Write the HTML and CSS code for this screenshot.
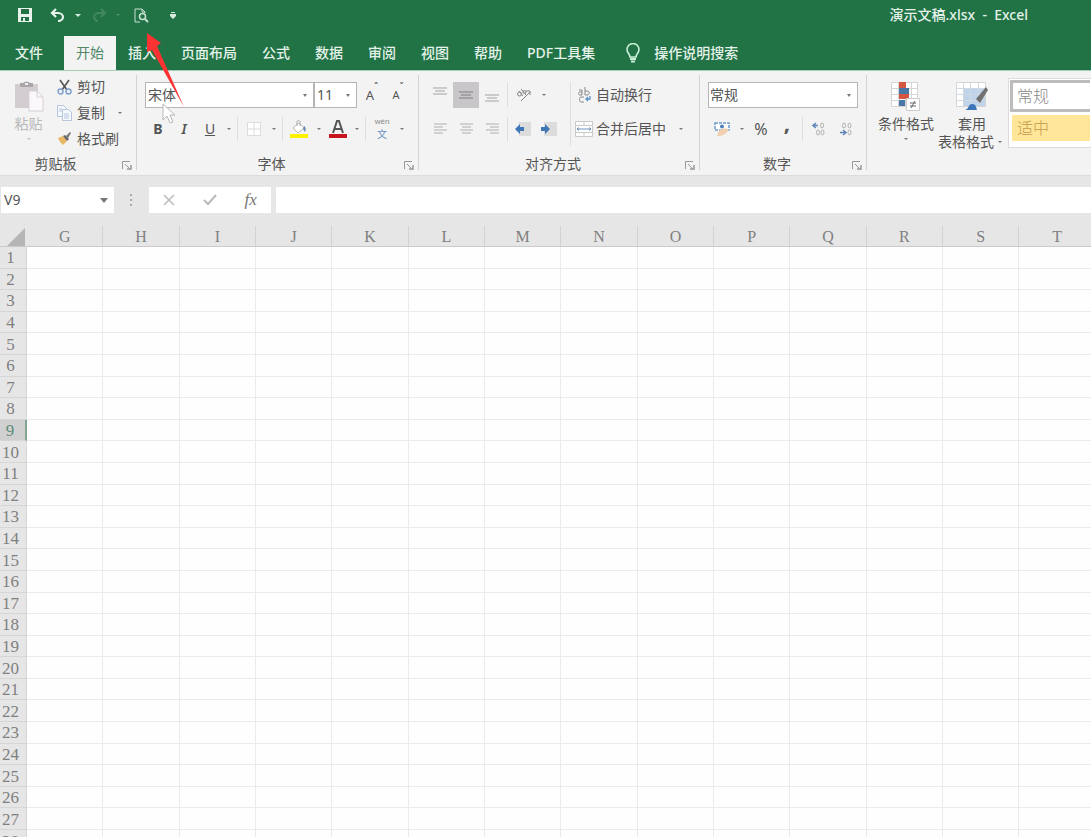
FILE: index.html
```html
<!DOCTYPE html>
<html lang="zh-CN">
<head>
<meta charset="utf-8">
<title>演示文稿.xlsx - Excel</title>
<link rel="stylesheet" href="styles.css">
</head>
<body>
<header class="titlebar">
  <div class="quick">
    <button class="qbtn" aria-label="保存"><svg width="14" height="14" viewBox="0 0 14 14"><path d="M0 0h14v14H0z" fill="#e8f3ec"/><path d="M3 1h8v5H3zM3 9h8v4H3z" fill="#217346"/><path d="M5 10h2v3H5z" fill="#e8f3ec"/></svg></button>
    <button class="qbtn undo" aria-label="撤消"><svg width="15" height="14" viewBox="0 0 15 14" fill="none" stroke="#e8f3ec" stroke-width="2.200"><path d="M6 1 2 5l4 4M2 5h6c3 0 5 2 5 4s-2 4-5 4"/></svg></button>
    <button class="caret light" aria-label="撤消列表"></button>
    <button class="qbtn redo" aria-label="恢复"><svg width="15" height="14" viewBox="0 0 15 14" fill="none" stroke="#43875f" stroke-width="2"><path d="m9 1 4 4-4 4M13 5H7C4 5 2 7 2 9s2 4 4 4"/></svg></button>
    <button class="caret faint" aria-label="恢复列表"></button>
    <button class="qbtn preview" aria-label="打印预览"><svg width="15" height="15" viewBox="0 0 15 15" fill="none" stroke="#c9e2d3"><path d="M6 14H1V1h7l3 3v1M8 1v3h3"/><circle cx="8.500" cy="8.500" r="3" stroke-width="1.500"/><path d="m11 11 3 3" stroke-width="2"/></svg></button>
    <button class="qbtn custom" aria-label="自定义快速访问工具栏"><svg width="6" height="7" viewBox="0 0 6 7"><path d="M1 0h4v1H1zM0 2h6v2L3 7 0 4z" fill="#d8eadf"/></svg></button>
  </div>
  <div class="doc-title">演示文稿.xlsx&nbsp; -&nbsp; Excel</div>
</header>
<nav class="tabs">
  <button class="tab file">文件</button>
  <button class="tab active">开始</button>
  <button class="tab">插入</button>
  <button class="tab">页面布局</button>
  <button class="tab">公式</button>
  <button class="tab">数据</button>
  <button class="tab">审阅</button>
  <button class="tab">视图</button>
  <button class="tab">帮助</button>
  <button class="tab">PDF工具集</button>
  <button class="tab tell"><svg width="14" height="20" viewBox="0 0 14 20" fill="none" stroke="#c9efd8" stroke-width="1.600"><path d="M4 14c0-3-3-4-3-7.500a6 6 0 0 1 12 0C13 10 10 11 10 14z"/><path d="M4 16h6M5 18.500h4" stroke-width="2"/></svg>操作说明搜索</button>
</nav>

<main class="ribbon">
  <section class="group clipboard">
    <div class="body">
      <button class="big paste" disabled>
        <svg width="30" height="32" viewBox="0 0 30 32"><path d="M1 4h23v24H1z" fill="#d3cdd2"/><path d="M6 3h3a4 3 0 0 1 7 0h3v4H6z" fill="#aaa6aa"/><path d="M11 3h3v2h-3z" fill="#eee"/><path d="M15 11h8l6 6v14H15z" fill="#faf8fa" stroke="#d6d0d6"/><path d="M23 11v6h6" fill="none" stroke="#d6d0d6"/></svg>
        <span>粘贴</span><i class="caret"></i>
      </button>
      <div class="stack">
        <button class="cmd"><svg width="15" height="16" viewBox="0 0 15 16" fill="none"><path d="m3 1 7 10M12 1 5 11" stroke="#555" stroke-width="1.600"/><circle cx="3.500" cy="12.500" r="2.500" stroke="#7c9fce" stroke-width="1.400"/><circle cx="11.500" cy="12.500" r="2.500" stroke="#7c9fce" stroke-width="1.400"/></svg>剪切</button>
        <button class="cmd"><svg width="15" height="16" viewBox="0 0 15 16" fill="#f5f8fc" stroke="#b5c6dd"><path d="M.5.500h6l3 3v8h-9z"/><path d="M5.500 4.500h6l3 3v8h-9z"/><path d="M2 4h3M2 6h3M7 9h5M7 11h5M7 13h5"/></svg>复制<i class="caret"></i></button>
        <button class="cmd"><svg width="15" height="16" viewBox="0 0 15 16"><path d="m1 7 5-2 4 5-4 4C4 12 2 10 1 7z" fill="#e9b965"/><path d="m6 5 2-1 4 4-2 2z" fill="#666"/><path d="m9 5 4-4 1 1-3 5z" fill="#777"/></svg>格式刷</button>
      </div>
    </div>
    <footer>剪贴板<button class="launch" aria-label="剪贴板设置"><svg width="10" height="9" viewBox="0 0 10 9" fill="none" stroke="#999"><path d="M.5 8V.500H8M3 3l5 5"/><path d="M9 4v4H5" stroke-width="1.500"/></svg></button></footer>
  </section>

  <section class="group font">
    <div class="body rows">
      <div class="row">
        <select class="pick family" aria-label="字体"><option>宋体</option></select>
        <select class="pick size" aria-label="字号"><option>11</option></select>
        <button class="tool grow" aria-label="增大字号">A<sup>ˆ</sup></button>
        <button class="tool shrink" aria-label="减小字号">A<sup>ˇ</sup></button>
      </div>
      <div class="row second">
        <button class="tool bold">B</button>
        <button class="tool italic">I</button>
        <button class="tool under">U</button><button class="caret" aria-label="下划线选项"></button>
        <i class="sep"></i>
        <button class="tool wide" aria-label="边框"><svg width="14" height="14" viewBox="0 0 14 14" fill="#fff" stroke="#dcdcdc"><path d="M.5.500h13v13H.5zM7 0v14M0 7h14"/></svg></button><button class="caret" aria-label="边框选项"></button>
        <i class="sep"></i>
        <button class="tool wide" aria-label="填充颜色"><svg width="18" height="18" viewBox="0 0 18 18"><path d="m3 8 6-5 5 5-6 5z" fill="#fff" stroke="#bbb"/><path d="M7 6V2c0-2 3-2 3 0v4" fill="none" stroke="#aaa"/><path d="M14 6c2 1 2 4 1 6l-2-3z" fill="#6686af"/><path d="M0 14h18v4H0z" fill="#fff200"/></svg></button><button class="caret" aria-label="填充选项"></button>
        <button class="tool" aria-label="字体颜色"><svg width="18" height="18" viewBox="0 0 18 18"><path d="m4 13 4-12h2l4 12M6 9h6" fill="none" stroke="#555" stroke-width="2"/><path d="M0 14h18v4H0z" fill="#c8141c"/></svg></button><button class="caret" aria-label="字体颜色选项"></button>
        <i class="sep"></i>
        <button class="tool wide phonetic" aria-label="拼音"><small>wén</small><b>文</b></button><button class="caret" aria-label="拼音选项"></button>
      </div>
    </div>
    <footer>字体<button class="launch" aria-label="字体设置"><svg width="10" height="9" viewBox="0 0 10 9" fill="none" stroke="#999"><path d="M.5 8V.500H8M3 3l5 5"/><path d="M9 4v4H5" stroke-width="1.500"/></svg></button></footer>
  </section>

  <section class="group align">
    <div class="body">
      <div class="rows">
        <div class="row">
          <button class="tool" aria-label="顶端对齐"><svg width="14" height="16" viewBox="0 0 14 16" stroke="#cbcbcb" stroke-width="2"><path d="M0 1h14M2 4h10M0 7h14"/></svg></button>
          <button class="tool on" aria-label="垂直居中"><svg width="14" height="14" viewBox="0 0 14 14" stroke="#a3a1a3" stroke-width="2"><path d="M0 4h14M2 7h10M0 10h14"/></svg></button>
          <button class="tool" aria-label="底端对齐"><svg width="14" height="14" viewBox="0 0 14 14" stroke="#cbcbcb" stroke-width="2"><path d="M0 7h14M2 10h10M0 13h14"/></svg></button>
          <i class="sep"></i>
          <button class="tool wide" aria-label="方向"><svg width="16" height="14" viewBox="0 0 16 14" fill="none" stroke="#858585"><path d="m5 13 9-9M10 3h4v4"/><circle cx="3.500" cy="6" r="2"/><path d="m3 3 4 5M5 1l5 6"/><circle cx="8.500" cy="4" r="1.500"/></svg></button><button class="caret" aria-label="方向选项"></button>
        </div>
        <div class="row">
          <button class="tool" aria-label="左对齐"><svg width="13" height="12" viewBox="0 0 13 12" stroke="#c6c6c6" stroke-width="1.500"><path d="M0 1h13M0 4h9M0 7h13M0 10h9"/></svg></button>
          <button class="tool" aria-label="居中"><svg width="13" height="12" viewBox="0 0 13 12" stroke="#c6c6c6" stroke-width="1.500"><path d="M0 1h13M2 4h9M0 7h13M2 10h9"/></svg></button>
          <button class="tool" aria-label="右对齐"><svg width="13" height="12" viewBox="0 0 13 12" stroke="#c6c6c6" stroke-width="1.500"><path d="M0 1h13M4 4h9M0 7h13M4 10h9"/></svg></button>
          <i class="sep"></i>
          <button class="tool" aria-label="减少缩进"><svg width="16" height="14" viewBox="0 0 16 14"><path d="M4 0h12v14H4z" fill="#dcdcdc"/><path d="M0 7l5-5v3h4v4H5v3z" fill="#3f76b5"/></svg></button>
          <button class="tool" aria-label="增加缩进"><svg width="16" height="14" viewBox="0 0 16 14"><path d="M3 0h13v14H3z" fill="#dcdcdc"/><path d="M9 7 4 2v3H0v4h4v3z" fill="#3f76b5"/></svg></button>
        </div>
      </div>
      <i class="sep tall"></i>
      <div class="rows">
        <button class="cmd wrap"><svg width="18" height="16" viewBox="0 0 18 16" fill="none" stroke="#888"><path d="M4 3h3v5M7 5H5c-2 0-2 3 0 3h2M10 0v8h2c3 0 3-4 0-4h-2M9 10H6c-2 0-2 5 0 5h3"/><path d="M15 9v3h-4M13 10l-2 2 2 2" stroke="#5f8fcb" stroke-width="1.300"/></svg>自动换行</button>
        <button class="cmd wrap"><svg width="18" height="16" viewBox="0 0 18 16" fill="#fff" stroke="#c9c9c9"><path d="M.5.500h17v15H.5zM9 0v4M9 12v4M0 4.500h17M0 11.500h17"/><path d="M2 8h14M4 6.500 2 8l2 1.500M14 6.500 16 8l-2 1.500" stroke="#6d93bf" fill="none"/></svg>合并后居中<i class="caret"></i></button>
      </div>
    </div>
    <footer>对齐方式<button class="launch" aria-label="对齐设置"><svg width="10" height="9" viewBox="0 0 10 9" fill="none" stroke="#999"><path d="M.5 8V.500H8M3 3l5 5"/><path d="M9 4v4H5" stroke-width="1.500"/></svg></button></footer>
  </section>

  <section class="group number">
    <div class="body rows">
      <div class="row"><select class="pick format" aria-label="数字格式"><option>常规</option></select></div>
      <div class="row">
        <button class="tool wide" aria-label="会计数字格式"><svg width="16" height="16" viewBox="0 0 16 16"><path d="M1 2h14v7H1z" fill="#fff" stroke="#6d9bd0" stroke-width="1.500" stroke-dasharray="3 1"/><circle cx="8" cy="5.500" r="2" fill="#4d7fb8"/><path d="M5 10c2-3 8-3 10-1l-4 4-5 2H3z" fill="#f0d0b0"/></svg></button><button class="caret" aria-label="会计选项"></button>
        <button class="tool percent">%</button>
        <button class="tool comma">,</button>
        <i class="sep"></i>
        <button class="tool wide" aria-label="增加小数位数"><svg width="14" height="14" viewBox="0 0 14 14" fill="none" stroke="#b0b0b0"><path d="M6 3.500H1M4 1 1 3.500 4 6" stroke="#5f86b8" stroke-width="1.500"/><ellipse cx="10" cy="3.500" rx="1.500" ry="2.500"/><ellipse cx="6" cy="10.500" rx="1.500" ry="2.500"/><ellipse cx="10.500" cy="10.500" rx="1.500" ry="2.500"/></svg></button>
        <button class="tool" aria-label="减少小数位数"><svg width="14" height="14" viewBox="0 0 14 14" fill="none" stroke="#b0b0b0"><path d="M1 10.500h5M4 8l3 2.500L4 13" stroke="#5f86b8" stroke-width="1.500"/><ellipse cx="5" cy="3.500" rx="1.500" ry="2.500"/><ellipse cx="10.500" cy="3.500" rx="1.500" ry="2.500"/><ellipse cx="10.500" cy="10.500" rx="1.500" ry="2.500"/></svg></button>
      </div>
    </div>
    <footer>数字<button class="launch" aria-label="数字设置"><svg width="10" height="9" viewBox="0 0 10 9" fill="none" stroke="#999"><path d="M.5 8V.500H8M3 3l5 5"/><path d="M9 4v4H5" stroke-width="1.500"/></svg></button></footer>
  </section>

  <section class="group styles">
    <div class="body">
      <button class="big">
        <svg width="30" height="32" viewBox="0 0 30 32"><path d="M.5 2.500h26v24H.5zM0 8.500h27M0 14.500h27M0 20.500h27M7.500 2v24M14.500 2v24M20.500 2v24" fill="#fff" stroke="#d5d5d5"/><path d="M8 2h7v6H8zM8 14h10v5H8z" fill="#d5573f"/><path d="M8 8h10v6H8zM8 20h6v6H8z" fill="#4a76a8"/><path d="M15.500 18.500h13v12h-13z" fill="#fff" stroke="#ccc"/><path d="M19 23h6M19 26h6M24 21l-4 7" stroke="#666"/></svg>
        <span>条件格式</span><i class="caret"></i>
      </button>
      <button class="big table-format">
        <svg width="32" height="32" viewBox="0 0 32 32"><path d="M.5 2.500h29v24H.5z" fill="#fff" stroke="#d5d5d5"/><path d="M8 8h21v18H8z" fill="#bfd3ea"/><path d="M0 8.500h29M0 14.500h29M0 20.500h29M7.500 2v24M14.500 2v24M22.500 2v24" stroke="#d0d8e2"/><path d="m20 19 10-12 2 3-8 13z" fill="#707070"/><path d="M9 30c4-1 3-6 7-6 4 0 4 3 5 6z" fill="#3d74b7"/></svg>
        <span>套用</span><span class="with-caret">表格格式<i class="caret"></i></span>
      </button>
      <div class="gallery">
        <button class="swatch normal">常规</button>
        <button class="swatch neutral">适中</button>
      </div>
    </div>
  </section>
</main>

<div class="formula-bar">
  <div class="name-box"><input type="text" value="V9" aria-label="名称框"><button aria-label="名称列表"><svg width="8" height="5" viewBox="0 0 8 5"><path d="M0 0h8L4 5z" fill="#777"/></svg></button></div>
  <svg class="grip" width="3" height="12" viewBox="0 0 3 12" fill="#aaa"><path d="M0 0h2v2H0zM0 5h2v2H0zM0 10h2v2H0z"/></svg>
  <div class="entry">
    <button aria-label="取消"><svg width="12" height="12" viewBox="0 0 12 12" stroke="#bbb" stroke-width="1.500"><path d="m1 1 10 10M11 1 1 11"/></svg></button>
    <button aria-label="输入"><svg width="14" height="12" viewBox="0 0 14 12" fill="none" stroke="#bbb" stroke-width="2"><path d="m1 6 4 4 8-9"/></svg></button>
    <button class="fx">fx</button>
  </div>
  <input class="formula" type="text" aria-label="编辑栏">
</div>

<div class="sheet">
  <table class="grid">
    <thead><tr id="columns"><th class="corner"><svg width="18" height="18" viewBox="0 0 18 18"><path d="M18 0v18H0z" fill="#b5b5b5"/></svg></th></tr></thead>
    <tbody id="rows"></tbody>
  </table>
</div>

<svg class="pointer" width="14" height="22" viewBox="0 0 14 22"><path d="M1 1v16l4-4 3 7 3-1-3-7h5z" fill="#fff" stroke="#b8b8b8"/></svg>
<svg class="arrow" width="38" height="75" viewBox="0 0 38 75"><path d="M1 0 15 10l-4 3 27 61L6 17l-5 2z" fill="#fa3232"/></svg>
<script src="sheet.js"></script>
</body>
</html>
```
FILE: styles.css
```css
* { box-sizing: border-box; }
body {
  margin: 0;
  height: 100vh;
  overflow: hidden;
  display: flex;
  flex-direction: column;
  background: #e6e6e6;
  color: #555;
  font: 14px/20px "Noto Sans", "Noto Sans CJK SC", sans-serif;
}
button, input, select { font: inherit; color: inherit; border: 0; padding: 0; margin: 0; background: none; border-radius: 0; }
button { display: inline-flex; align-items: center; justify-content: center; white-space: nowrap; }
svg { flex: none; display: block; }

.caret { flex: none; width: 12px; height: 12px; display: inline-flex; align-items: center; justify-content: center; }
.caret::before { content: ""; border: 2px solid transparent; border-top: 2px solid #777; border-bottom: 0; }
.caret.light::before { border-top-color: #d8eadf; border-width: 3px 3px 0; }
.caret.faint::before { border-top-color: #4d9069; }

.titlebar { flex: none; height: 36px; background: #217346; display: flex; align-items: center; justify-content: space-between; padding: 0 63px 6px 18px; }
.quick { display: flex; align-items: center; }
.undo { margin-left: 18px; }
.titlebar .caret { margin-left: 7px; }
.redo { margin-left: 8px; }
.titlebar .caret.faint { margin-left: 5px; }
.preview { margin-left: 10px; }
.custom { margin-left: 21px; }
.doc-title { color: #e4f2e9; font-weight: 500; }

.tabs { flex: none; height: 34px; background: #217346; display: flex; }
.tab { color: #e4f2e9; padding: 0 13px 0 12px; font-weight: 500; }
.tab.file { padding: 0 21px 0 15px; }
.tab.active { background: #f3f3f3; color: #4f8768; padding: 0 12px; font-weight: 400; }
.tab.tell { gap: 14px; padding-left: 18px; }

.ribbon { flex: none; height: 106px; display: flex; background: #f3f3f3; border-top: 1px solid #a3cdb4; border-bottom: 1px solid #dcdcdc; padding: 4px 0 5px; overflow: hidden; }
.group { flex: none; display: flex; flex-direction: column; justify-content: space-between; border-right: 1px solid #d2d2d2; }
.group footer { display: flex; justify-content: center; padding-right: 20px; line-height: 12px; position: relative; }
.launch { position: absolute; right: 4px; top: 3px; }
.body { display: flex; }
.rows { display: flex; flex-direction: column; gap: 8px; padding-top: 7px; }
.row { display: flex; align-items: center; height: 26px; }
.sep { flex: none; width: 1px; height: 24px; margin: 0 2px; background: #dedede; }
.sep.tall { height: 64px; margin: 7px 4px 0 8px; }
.tool { width: 26px; height: 26px; }
.tool.wide { width: 28px; }
.tool.on { background: #c8c6c8; }
.cmd { gap: 5px; }
.pick { appearance: none; height: 26px; border: 1px solid #b5b5b5; background: #fff url("data:image/svg+xml,%3Csvg xmlns='http://www.w3.org/2000/svg' width='4' height='3'%3E%3Cpath d='M0 0h4L2 3z' fill='%23777'/%3E%3C/svg%3E") no-repeat right 6px center; }

.clipboard { width: 137px; }
.clipboard footer { padding-right: 25px; }
.big { flex-direction: column; justify-content: flex-start; height: 74px; padding-top: 5px; }
.big span { line-height: 18px; }
.big svg { margin-bottom: 3px; }
.paste { width: 57px; color: #b9b9b9; }
.paste .caret { opacity: .4; }
.stack { display: flex; flex-direction: column; gap: 6px; padding-top: 2px; align-items: flex-start; }
.stack .cmd { height: 20px; }
.stack .caret { margin-left: 4px; }

.font { width: 282px; padding-left: 8px; }
.family { width: 169px; padding-left: 2px; }
.size { width: 43px; padding-left: 2px; }
.grow { margin-left: 2px; font-size: 13px; }
.shrink { font-size: 11px; }
.tool sup { font-size: 10px; line-height: 10px; align-self: flex-start; }
.bold { font-weight: 700; }
.italic { font-style: italic; font-weight: 600; }
.under { text-decoration: underline; }
.phonetic { flex-direction: column; color: #888; }
.phonetic small { font: 8px/9px "Liberation Sans", sans-serif; }
.phonetic b { font: 10px/15px "Noto Sans CJK SC", sans-serif; color: #668fc4; }

.align { width: 281px; padding-left: 8px; }
.wrap { height: 26px; align-self: flex-start; gap: 3px; }
.wrap .caret { margin-left: 6px; }

.number { width: 167px; padding-left: 8px; }
.format { width: 150px; padding-left: 1px; }
.percent { font-size: 16px; }
.comma { font-size: 22px; font-weight: 700; padding-bottom: 14px; }

.styles { flex: 1; min-width: 0; border-right: 0; padding-left: 10px; }
.styles .big { width: 58px; }
.styles .table-format { width: 68px; margin-left: 3px; }
.with-caret { display: flex; align-items: center; }
.gallery { flex: 1; margin: 3px 0 0 2px; padding: 1px; border: 1px solid #dcdcdc; border-right: 0; background: #fff; display: flex; flex-direction: column; gap: 3px; height: 70px; }
.swatch { font-size: 16px; font-weight: 300; justify-content: flex-start; }
.normal { height: 32px; border: 3px solid #bcbcbc; border-right: 0; padding-left: 4px; color: #888; }
.neutral { height: 26px; margin-left: 2px; padding-left: 5px; background: #ffe699; color: #c39a4b; }

.formula-bar { flex: none; height: 50px; padding: 11px 0 13px 1px; display: flex; align-items: center; }
.name-box { width: 113px; height: 26px; background: #fff; display: flex; }
.name-box input { flex: 1; min-width: 0; padding-left: 3px; }
.name-box button { width: 20px; }
.grip { margin: 0 16px 0 16px; }
.entry { width: 122px; height: 26px; background: #fff; display: flex; }
.entry button { flex: 1; }
.fx { font: italic 17px "Liberation Serif", serif; color: #777; }
.formula { flex: 1; height: 26px; margin-left: 5px; background: #fff; }

.sheet { flex: 1; min-height: 0; overflow: hidden; }
.grid { width: calc(100% + 5px); height: calc(100% + 15px); table-layout: fixed; border-collapse: separate; border-spacing: 0; background: #fefefe; font-family: "Liberation Serif", serif; }
.grid th { padding: 2px 0 0; font-weight: 400; color: #808080; background: #e6e6e6; font-size: 17px; line-height: 18px; }
.grid thead th { height: 21px; border-right: 1px solid #d2d2d2; border-bottom: 1px solid #cacaca; font-size: 16px; }
.grid .corner { width: 27px; padding: 2px 0 0 7px; border-right-color: #e6e6e6; vertical-align: bottom; }
.grid tbody th { border-right: 1px solid #d6d6d6; border-bottom: 1px solid #d6d6d6; padding-right: 5px; }
.grid td { padding: 0; border-right: 1px solid #ebebeb; border-bottom: 1px solid #ebebeb; }
.grid .current th { background: #d0d0d0; color: #5f8d79; border-right: 2px solid #7fa592; }

.pointer { position: absolute; left: 162px; top: 103px; }
.arrow { position: absolute; left: 146px; top: 33px; }
```
FILE: sheet.js
```js
const letters = 'GHIJKLMNOPQRST';
const columns = document.getElementById('columns');
for (const letter of letters) {
  const th = document.createElement('th');
  th.textContent = letter;
  columns.append(th);
}
const rows = document.getElementById('rows');
for (let n = 1; n <= 28; n++) {
  const tr = rows.insertRow();
  if (n === 9) tr.className = 'current';
  const th = document.createElement('th');
  th.textContent = n;
  tr.append(th);
  for (let i = 0; i < letters.length; i++) tr.insertCell();
}
```
